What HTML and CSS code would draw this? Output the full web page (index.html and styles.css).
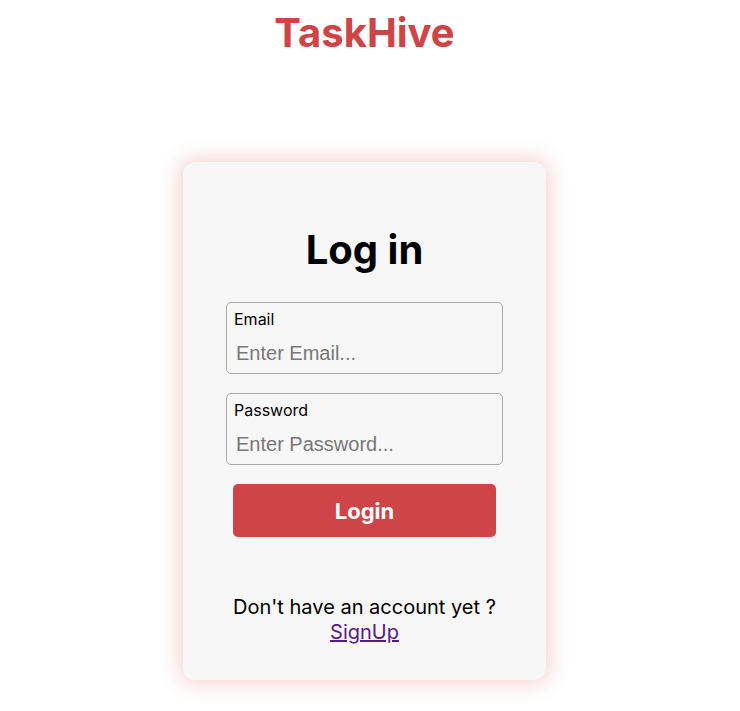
FILE: index.html
```html
<!DOCTYPE html>
<html>
<head>
<meta charset="utf-8">
<link rel="stylesheet" href="styles.css">
</head>
<body>
<header class="brand">TaskHive</header>
<main class="page">
  <form class="card">
    <h1 class="card-title">Log in</h1>
    <label class="field">
      <span class="field-label">Email</span>
      <input class="field-input" type="email" placeholder="Enter Email...">
    </label>
    <label class="field">
      <span class="field-label">Password</span>
      <input class="field-input" type="password" placeholder="Enter Password...">
    </label>
    <button class="login-btn" type="button">Login</button>
    <p class="signup">Don't have an account yet ?<br><a class="signup-link" href="#">SignUp</a></p>
  </form>
</main>
</body>
</html>
```

FILE: styles.css
```css
html, body {
  margin: 0;
  padding: 0;
  background: #ffffff;
  font-family: Inter, "Noto Sans", sans-serif;
}
body {
  padding-right: 11px;
  padding-bottom: 40px;
}
.brand {
  text-align: center;
  color: #cf4446;
  font-weight: 700;
  font-size: 40px;
  line-height: 48px;
  padding-top: 9px;
}
.page {
  display: flex;
  justify-content: center;
  padding-top: 105px;
}
.card {
  width: 363px;
  height: 518px;
  box-sizing: border-box;
  background: #f7f7f7;
  border-radius: 12px;
  box-shadow: 0 0 20px 3px rgba(225, 95, 95, 0.3);
  display: flex;
  flex-direction: column;
  align-items: center;
  padding-top: 64px;
}
.card-title {
  margin: 0;
  font-size: 40px;
  line-height: 48px;
  font-weight: 700;
  color: #000;
}
.field {
  display: flex;
  flex-direction: column;
  width: 277px;
  height: 72px;
  box-sizing: border-box;
  border: 1px solid #aaaaaa;
  border-radius: 5px;
  padding: 7px 7px 0 7px;
  margin-top: 19px;
}
.card-title + .field {
  margin-top: 28px;
}
.field-label {
  font-size: 16px;
  line-height: 19px;
  color: #000;
}
.field-input {
  border: none;
  outline: none;
  background: transparent;
  font-family: "Liberation Sans", Arial, sans-serif;
  font-size: 20px;
  padding: 4px 2px;
  margin-top: 9px;
  color: #000;
}
.field-input::placeholder {
  color: #777777;
}
.login-btn {
  margin-top: 19px;
  width: 263px;
  height: 53px;
  border: none;
  border-radius: 5px;
  background: #cf4446;
  color: #fff;
  font-family: Inter, sans-serif;
  font-weight: 700;
  font-size: 22px;
}
.signup {
  margin: 58px 0 0 0;
  text-align: center;
  font-size: 20px;
  line-height: 25px;
  color: #000;
}
.signup-link {
  color: #551a8b;
}
```
